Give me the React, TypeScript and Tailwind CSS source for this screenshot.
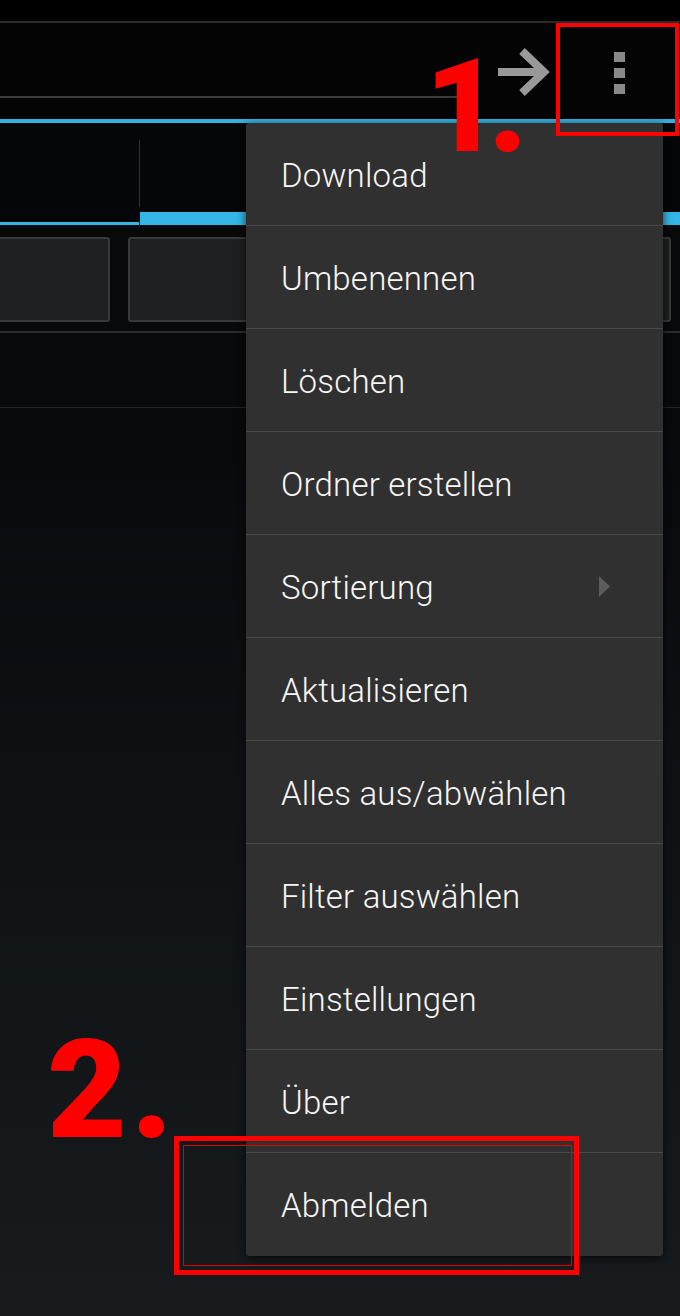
import React from 'react'

const items = [
  'Download',
  'Umbenennen',
  'Löschen',
  'Ordner erstellen',
  'Sortierung',
  'Aktualisieren',
  'Alles aus/abwählen',
  'Filter auswählen',
  'Einstellungen',
  'Über',
  'Abmelden',
]

const App = () => {
  return (
    <div className="relative h-[1316px] w-[680px] overflow-hidden bg-black font-['Roboto',sans-serif]">
      <div className="flex h-full flex-col">
        {/* status strip */}
        <div className="h-[21px] bg-black" />
        <div className="h-[2px] bg-[#2b2b2b]" />

        {/* action bar */}
        <div className="flex h-[96px] items-start bg-[#040404]">
          <div className="mt-[73px] h-[2px] w-[470px] bg-[#3a3a3a]" />
          <svg className="ml-[26px] mt-[24px]" width="54" height="50" viewBox="0 0 54 50">
            <path d="M2 25 H49 M26 4 L48 25 L26 46" fill="none" stroke="#999999" strokeWidth="8" />
          </svg>
          <div className="ml-[64px] mt-[29px] flex flex-col gap-[6px]">
            <div className="h-[10px] w-[11px] bg-[#898989]" />
            <div className="h-[10px] w-[11px] bg-[#898989]" />
            <div className="h-[10px] w-[11px] bg-[#898989]" />
          </div>
        </div>
        <div className="h-[4px] bg-[#33b0e0]" />

        {/* tabs */}
        <div className="flex h-[102px] bg-[#050608]">
          <div className="flex w-[139px] flex-col justify-end">
            <div className="h-[3px] bg-[#33b5e5]" />
          </div>
          <div className="mt-[17px] h-[67px] w-px bg-[#333333]" />
          <div className="flex flex-1 flex-col justify-end">
            <div className="h-[13px] bg-[#33b5e5]" />
          </div>
        </div>

        {/* buttons */}
        <div className="flex h-[106px] gap-[18px] bg-[#08090b] pt-[12px]">
          <div className="-ml-[20px] h-[85px] w-[130px] rounded-[3px] border-2 border-[#38393b] bg-[#1e1f20]" />
          <div className="h-[85px] w-[543px] rounded-[3px] border-2 border-[#38393b] bg-[#1e1f20]" />
        </div>
        <div className="h-[2px] bg-[#2a2b2d]" />
        <div className="h-[74px] bg-[#08090b]" />
        <div className="h-px bg-[#222426]" />

        {/* list area */}
        <div className="flex-1 bg-gradient-to-b from-[#08090b] to-[#181b1e]" />
      </div>

      {/* overflow menu */}
      <div className="absolute left-[246px] top-[123px] w-[417px] rounded-[3px] bg-[#303030] shadow-[0_2px_8px_rgba(0,0,0,0.7)]">
        {items.map((label, i) => (
          <div
            key={label}
            className={`flex h-[103px] items-center justify-between pl-[35px] pr-[53px] ${
              i < items.length - 1 ? 'border-b border-[#4a4a4a]' : ''
            }`}
          >
            <span className="pt-[2px] text-[33px] font-light leading-none tracking-[0.2px] text-[#f6f6f6]">
              {label}
            </span>
            {label === 'Sortierung' && (
              <svg width="11" height="21" viewBox="0 0 11 21">
                <polygon points="0,0 11,10.5 0,21" fill="#5c5c5c" />
              </svg>
            )}
          </div>
        ))}
      </div>

      {/* annotations */}
      <div className="absolute left-[556px] top-[23px] h-[113px] w-[123px] border-[4px] border-[#ff0000]" />
      <div className="absolute left-[174px] top-[1136px] h-[139px] w-[405px] border-[5px] border-[#ff0000]">
        <div className="ml-[4px] mt-[4px] h-[121px] w-[389px] border border-[#e00000]" />
      </div>
      <div className="absolute left-[425px] top-[42px] font-['Roboto',sans-serif] text-[130px] font-black leading-none tracking-[-12px] text-[#ff0000]">
        1.
      </div>
      <div className="absolute left-[47px] top-[1021px] font-['Roboto',sans-serif] text-[138px] font-black leading-none tracking-[4px] text-[#ff0000]">
        2.
      </div>
    </div>
  )
}

export default App
